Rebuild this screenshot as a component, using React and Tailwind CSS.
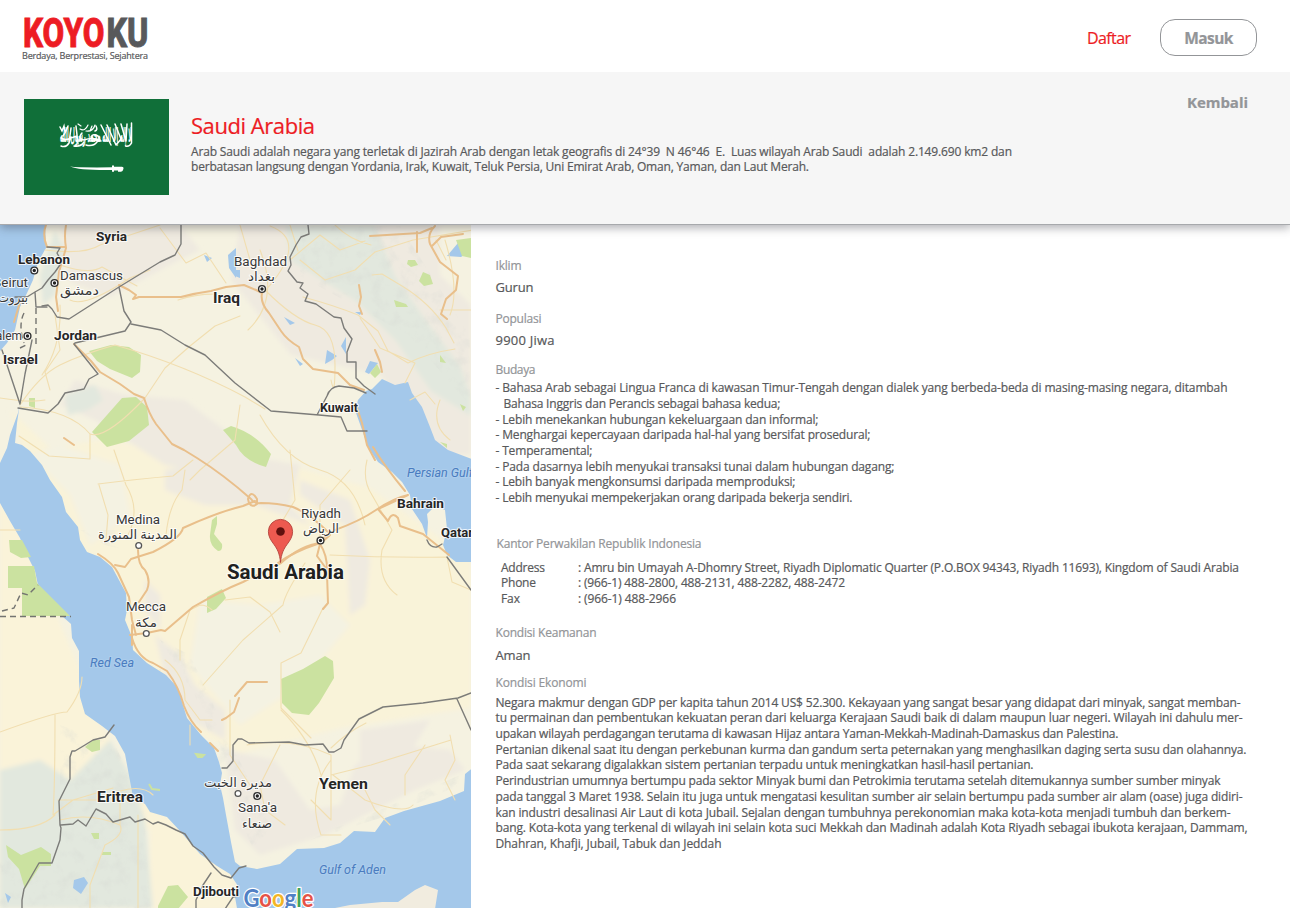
import React, { useLayoutEffect, useRef, useState } from "react";

// A single line of copy, tracked so that it fills the given measure.
function Line({ w, className = "", children }) {
  const ref = useRef(null);
  const [tracking, setTracking] = useState(0);
  useLayoutEffect(() => {
    const natural = ref.current.getBoundingClientRect().width;
    const count = Math.max(1, ref.current.textContent.length - 1);
    setTracking((w - natural) / count);
  }, []);
  return (
    <div className={"whitespace-pre " + className}>
      <span ref={ref} style={{ letterSpacing: tracking + "px" }}>{children}</span>
    </div>
  );
}

const culture = [
  ["- Bahasa Arab sebagai Lingua Franca di kawasan Timur-Tengah dengan dialek yang berbeda-beda di masing-masing negara, ditambah", 732],
  ["Bahasa Inggris dan Perancis sebagai bahasa kedua;", 277, true],
  ["- Lebih menekankan hubungan kekeluargaan dan informal;", 323],
  ["- Menghargai kepercayaan daripada hal-hal yang bersifat prosedural;", 375],
  ["- Temperamental;", 97],
  ["- Pada dasarnya lebih menyukai transaksi tunai dalam hubungan dagang;", 399],
  ["- Lebih banyak mengkonsumsi daripada memproduksi;", 300],
  ["- Lebih menyukai mempekerjakan orang daripada bekerja sendiri.", 357],
];

const office = [
  ["Address", 44, ": Amru bin Umayah A-Dhomry Street, Riyadh Diplomatic Quarter (P.O.BOX 94343, Riyadh 11693), Kingdom of Saudi Arabia", 661],
  ["Phone", 35, ": (966-1) 488-2800, 488-2131, 488-2282, 488-2472", 267],
  ["Fax", 19, ": (966-1) 488-2966", 98],
];

const economy = [
  ["Negara makmur dengan GDP per kapita tahun 2014 US$ 52.300. Kekayaan yang sangat besar yang didapat dari minyak, sangat memban-", 745],
  ["tu permainan dan pembentukan kekuatan peran dari keluarga Kerajaan Saudi baik di dalam maupun luar negeri. Wilayah ini dahulu mer-", 747],
  ["upakan wilayah perdagangan terutama di kawasan Hijaz antara Yaman-Mekkah-Madinah-Damaskus dan Palestina.", 623],
  ["Pertanian dikenal saat itu dengan perkebunan kurma dan gandum serta peternakan yang menghasilkan daging serta susu dan olahannya.", 751],
  ["Pada saat sekarang digalakkan sistem pertanian terpadu untuk meningkatkan hasil-hasil pertanian.", 538],
  ["Perindustrian umumnya bertumpu pada sektor Minyak bumi dan Petrokimia terutama setelah ditemukannya sumber sumber minyak", 725],
  ["pada tanggal 3 Maret 1938. Selain itu juga untuk mengatasi kesulitan sumber air selain bertumpu pada sumber air alam (oase) juga didiri-", 747],
  ["kan industri desalinasi Air Laut di kota Jubail. Sejalan dengan tumbuhnya perekonomian maka kota-kota menjadi tumbuh dan berkem-", 735],
  ["bang. Kota-kota yang terkenal di wilayah ini selain kota suci Mekkah dan Madinah adalah Kota Riyadh sebagai ibukota kerajaan, Dammam,", 752],
  ["Dhahran, Khafji, Jubail, Tabuk dan Jeddah", 226],
];

function Logo() {
  return (
    <svg width="130" height="34" viewBox="22 15 130 34" className="overflow-visible" fontFamily="Roboto, sans-serif" fontWeight="800" fontSize="41.2" strokeWidth="0.9">
      <text x="23" y="46.8" fill="#ed1c24" stroke="#ed1c24" textLength="81.500" lengthAdjust="spacingAndGlyphs">KOYO</text>
      <text x="106.5" y="46.8" fill="#58595b" stroke="#58595b" textLength="42" lengthAdjust="spacingAndGlyphs">KU</text>
    </svg>
  );
}

function Flag() {
  return (
    <svg width="145" height="96" viewBox="0 0 145 96" className="shrink-0">
      <rect width="145" height="96" fill="#106f39" />
      <text transform="translate(36 43) scale(1 1.6)" fill="#fff" fontFamily="'DejaVu Sans', sans-serif" fontWeight="bold" fontSize="12" direction="ltr" textLength="72" lengthAdjust="spacingAndGlyphs">لا إله إلا الله محمد رسول الله</text>
      <g fill="none" stroke="#fff" strokeWidth="1.5" strokeLinecap="round">
        <path d="M77 26l10 20M83 26l9 20M91 25l6 15M97 25l5 17M103 25l-1 17M107.500 24v20q-2 4-6 3M92 46l6-7M72 27q2 4-1 5" />
        <path d="M37 47q5 2 8-3l2-6M37 39q5 3 10 0l6-2M50 47q7 1 10-4M62 46q7 2 11-3 4-3 1-6-5-3-7 1 3 4 10 4M36 28l2 4 2-5 1 6M44 27q-2 6-5 10M47 29l-2 15M52 27l2 18M58 34q-5 6 2 7 8-3 16 0" />
        <path d="M56 30q5 3 8-4M62 32q7 1 9-6M66 32l2-5M54 25l3 2" strokeWidth="1.2" />
      </g>
      <path d="M46 67.5q9 1.200 42 .8v-1.800h2v1.300h7q3-.5 2.500 2t-2.500 3h-3v-1.300h-4v1.200h-2v-1.700q-33 .4-42-3.500z" fill="#fff" />
    </svg>
  );
}

const water = "#a4c8ea";
const park = "#cbe2a0";

const majorRoads = [
  "M119 285l10 5 7 5-3 4 6-2h42q15-4 30-6l15-4 18-2 12 5 6 3q-2 10 7 20l12 18q6 9 18 16l4 12 10 10 25 4q7 7 12 12l14 5",
  "M74 344l17 17 9 11 20 12 14 10 10 4q5 16 12 26l16 20 12 6 13 8q27 17 54 41 3 5 10 4 16 0 32 4 17 7 35 25",
  "M115 565l10 2 6-8 22-7q28-14 30-24 35-16 60-22l12-5",
  "M98 554q15 9 20 19l11 24 3 23 4 15M138 550q0 15 7 20 6 10 2 20l-8 12M130 635q16-1 31-5l4 1 28-24q30-17 50-25l38-19q20-18 40-20l9-8",
  "M320 544l-3 12 11 15M323 538l12-8q25-9 41-20 18-12 32-15l-30 14 10 12q4-10 10-3l2 8 23 8 26 21",
  "M320 544q8 12 7 30l1 29-5 6M278 563q15-11 42-20M132 638q6 20 21 25l14 8q12 16 17 35 6 16 17 26",
  "M373 447q12 20 32 44M370 236l50-3 12-5M417 232v20M435 226q-8 8-5 18l10 18 18 14-2 14-10 9-5 15 6 5M432 246l9-9 22-3M359 285l2 12-2 9 3 8M375 350l5 12 2 10M356 405l6 18 5 22 8 15",
  "M66 225q-2 11 0 23l-7 24-3 25 2 14M46 225q-4 10 1 22h18M20 302l-6 20M64 438l10 7M239 698l-5 14-8 6-4 2M235 696l12-14 20 0",
  "M248 499q3-10 9 0v5q-5 4-8-1zM132 625l0 20M210 743l8 8",
];

const minorRoads = [
  "M0 398q30 5 45 2M45 250q40 5 55-5l60-20M60 265q30 10 42 2l35 19M20 407q50 3 70 27 15 6 55-36M90 434v25l-41-3-30-20M20 405q20-30 40-40t55-20q70 20 130 52l20 12M42 375q20-30 18-70M50 390l-5-18 15-22-5-35M70 300q15 8 60-22l20-8M178 300q30-10 60-3M160 228l26 35 20-10 20 30",
  "M145 398l20-30 25-22 25-20 25-10M270 226q40 15-5 65M250 260l-10-35M260 250q20 50-12 80M265 290q30 30 50 35t20 40-4 15M290 225l8 26M290 260l30-25 20 15 25-9M300 260l25 20 30-10 20-18 38-12 60-10M372 275l10-1 20 12q28 17 44 42l8 15M303 297q30 8 55 18l20 16 10 20 20 12q20-10 47-14M360 318l20 30 35 15-10 20M335 225q15 15 36 20",
  "M260 415q25 45 60 55t45 55M240 405l-5 35-35 30-10 10M367 460q-5 20 5 35l20 35-10 20q-5 30 15 45M330 555q60 3 117 2l5 25 19 8M98 484q40-5 75-8l20-16M114 450l12 35q15 25 2 50M99 485l9 30-2 25M166 535q3-30 16-45l3-20M290 450l5 50-12 20M320 540v-35l30-35M0 530h20M305 563q-20 30-22 42l-40 35-40 45M323 608l-22 45-20 10v45l30 30M212 610q-5-5-12-5l-10 5-10 30 0 20M225 600l25-3 20 15 10 20M280 745l-20 40 5 25 20 15M165 660q20 15 20 40l15 20 12 0",
  "M0 732q55-20 67-20 15-20 15-35M55 715q0 70-2 100l20-15 40-12M0 830q40 0 55-15M58 800h40q40-20 55-5M120 795v30q5 10-15 20l-15 40v24M138 815v94M60 820q30-8 60 5M230 700v55q10 15 20 30M190 725v20M160 670l0 0M247 745q45-8 84 10v65l-20-20M331 748q15-15 35-25M331 760q-25 32-10 75l20 0M331 775l40-10 80-25M333 775l32 25q40 15 48 5M281 710q30 30 40 65M365 790l10 20 15 15M425 745l-20 30 0 20M450 735l5 25-10 20 10 20M445 240q15 50 5 75M440 400q-10 25 10 40M436 240l10 20M440 310h31M410 400l15-8 10 12",
];

const borders = [
  "M181 225v19l-6 11-15 7-41 25-50 32-12-2-5-8-4-4-6 1M119 287l5 24 7 11-6 9-50 12-1 1 24 30-9 5-5 10-19 4-7 11-10 9-30-5",
  "M131 324l30 6 24 15 20 10 30 28 36 28 48 4 22 2 6 14h20M317 415l10-19q3-9 12-10l15 2 12 5",
  "M308 225l1 9-8 3-5 8-6 12 1 8-3 6 9 11 6 1-3 5 8 6-3 7 11 3 18 13 7 1 3 10 8 11-5 13v10h9v16l8 8 11 8",
  "M2 350l18 54 5-30 7-34M47 247l13 1-3 5 5 9-7 10-7 8-6 8-7 4 1 15 11 0M35 292l-8 5-12 0",
  "M114 725l-9 12-12 3-8 5-10 6h-3l-2 6v22l-11 22 1 24 1 3-1 12-8 23H39l-15 26-2 11v10M61 825l12-1 5-4 8 6 10-17 10 5 7 8 17-5 5 5 10-3 8 5 5-2 8 3 10 5 9 4 8 12 10 7 11 14 8 8 9 3 8-10 7-2M211 873l-8 12-7 15v9",
  "M222 768l5 0 6-7 0-16 5-6h4l7 4 40-1 16 3 18-1 6 8h5l7-4 3-8 15-21 24-12 40-4 35-5 13-5M457 699l14 31",
  "M427 540q3 8 10 7l5-3M447 557l24 33M225 909l8-12 5-1",
];

const labels = [
  ["Syria", 96, 241, 31, "c"], ["Lebanon", 18, 264, 52, "c"], ["Damascus", 60, 280, 63, "t"],
  ["دمشق", 60, 295, 39, "t"], ["Iraq", 213, 303, 27, "l"], ["Baghdad", 234, 266, 53, "t"], ["بغداد", 248, 281, 27, "t"],
  ["Jordan", 54, 340, 43, "c"], ["Israel", 3, 364, 35, "c"], ["Kuwait", 320, 412, 38, "c"], ["Bahrain", 397, 508, 47, "c"],
  ["Medina", 116, 524, 44, "t"], ["المدينة المنورة", 98, 539, 79, "t"], ["Riyadh", 301, 518, 40, "t"], ["الرياض", 303, 533, 36, "t"],
  ["Mecca", 126, 611, 40, "t"], ["مكة", 135, 627, 22, "t"], ["Eritrea", 97, 802, 46, "l"], ["Yemen", 319, 789, 49, "l"],
  ["مديرة الخبت", 204, 787, 68, "t"], ["Sana'a", 238, 812, 39, "t"], ["صنعاء", 242, 828, 30, "t"], ["Djibouti", 193, 896, 46, "c"],
  ["Saudi Arabia", 227, 579, 117, "x"],
  ["Red Sea", 90, 667, 44, "w"], ["Gulf of Aden", 319, 874, 67, "w"],
  ["Beirut", -7, 287, 35, "t"], ["بيروت", -2, 302, 30, "t"], ["Jerusalem", -34, 340, 56, "t"], ["Persian Gulf", 407, 477, 66, "w"], ["Qatar", 441, 537, 32, "c"],
];

const labelStyle = {
  c: "text-[13px] font-bold fill-[#262626] stroke-white/80",
  l: "text-[14.5px] font-bold fill-[#262626] stroke-white/80",
  x: "text-[19.5px] font-bold fill-[#202020] stroke-white/80",
  t: "text-[13px] font-normal fill-[#383838] stroke-white/80",
  w: "text-[12.5px] font-normal italic fill-[#4a7cc0] stroke-white/10",
};

const capitals = [[34.3, 270.5], [54.5, 283], [27.5, 336], [262, 289], [320.5, 540.5], [257.3, 796]];
const towns = [[138.7, 545.5], [146.3, 633.5], [238, 793.5]];

function MapPanel() {
  return (
    <svg width="471" height="683" viewBox="0 225 471 683" className="block shrink-0">
      <defs>
        <filter id="soft" x="-10%" y="-10%" width="120%" height="120%"><feGaussianBlur stdDeviation="2" /></filter>
        <filter id="relief" x="0" y="0" width="100%" height="100%">
          <feTurbulence type="fractalNoise" baseFrequency="0.07" numOctaves="4" seed="8" />
          <feColorMatrix values="0 0 0 0 .66  0 0 0 0 .68  0 0 0 0 .64  0 2.4 0 0 -1.15" />
          <feComposite in2="SourceGraphic" operator="in" />
        </filter>
      </defs>
      <rect y="225" width="471" height="683" fill="#f5f2e1" />
      <g filter="url(#soft)">
        <path d="M10 410l40 38 60-10 70 20 60 20 60-10 70 20 70 50 31 20v150l-130 20-100 25-70-30-50-80-60-100-30-70z" fill="#f9f3d9" />
        <path d="M0 500l30 50 50 120 20 50 35 70 60 50 40 30v40H150V830L60 800 0 780z" fill="#faf3d9" />
        <path d="M200 600l60 5 60-10 30 30-50 60-60 40-50-60zM30 455l30-10 60 20 10 50-40 30-20-50z" fill="#f4f2e2" />
        <path d="M60 228l120-3 20 25-30 15-60 32-40-15zM240 225h200v50l31 30v150h-30l-60-80-90-20-60-75zM75 380l50 15 60 5 40 30 40 20-25 30-75-15-70-45-35-15zM165 470l75-15 60 10-10 40 20 20-55-20-50 0-40-15zM300 480l50 20 20 60-5 45-15 10-5-90-45-30z" fill="#efeae0" />
        <path d="M285 226h90l20 50 35 50 30 40 11 30v20l-40-25-35-50-40-40-65-40zM55 230l10 20-10 45-12 10-3-30zM65 395l30-10 8 15-15 10-20 5zM0 770l40-10 30 20 40-40 20 35 15 45 8 88H0z" fill="#e2e8de" />
        <path d="M225 750l50 10 35 50 30-5 15-40 40-20 55 5 15 20-50 20-90 45-65 20-25-25zM145 580l15 15 0 35-15-20zM155 635l25 20 15 30 30 25v30l-35-20-25-45zM360 730l70-10-30 50-40 15z" fill="#efeae0" />
      </g>
      <path d="M300 226h100l70 110v70l-60-70-110-60zM60 725l55 20 28 60 8 103H60zM160 640l30 15 40 85 40 85-15 30-20-50-40-110zM80 530h40l5 20-20-5zM330 830l50-20 80-35v10l-70 30-80 25zM0 860h60v48H0z" fill="#fff" filter="url(#relief)" opacity=".4" />
      <g fill={water}>
        <path d="M0 225h45l1 23-8 14-5 18-6 13-7 14-5 23-8 13-7 8z" />
        <path d="M20 403l-3 20-2 20 7 2 8 6 12 14 8 15 12 17 4 15 12 15 2 13 7 12 13 5 12 10 14 26 1 17-2 10 7 17 1 13 14 13 19 12 12 13 5 17 4 13 14 17 13 13 5 14 3 11-2 12 3 13 3 17 5 27 4 20 5 4 17 3 23-5 17-15 27-1 16-5 14-12 21 1 10-14 19-7 36-10 24-10 1-17 9-7v150H240l-2-3-3-17 3-11-8-12-13-8-17-12-20-23-13-14-17-5-5-8-12-7-3-16-5-27-10-18-13-10-17-12-5-17-1-16v-30l-7-13-1-14-18-16-13-13-5-24-10-20-5-13-10-17-10-18v-40l7-15 3-13 8-22z" />
        <path d="M366 391l6-2 10-10 13 6 13-3 4 11 10 14 8 20 5 13 13 10 24 9v103l-16 0-9-7-4-10 4-16-2-19-10-4-8 8 1 8-1 16-5-14-10-15-2-14-8-13-10-10-14-10-10-15-7-20-6-17 3-10z" />
        <path d="M228 255l8-7v30l-7-10zM365 372l5-11 8 2-9 11zM235 270l5 0v8l-5-2zM447 256l11-13 6 12-3 2zM327 350l10 6-5 4-7 4zM341 346l5-9v17zM204 255l8 3-5 4zM295 358l8 6-3 2zM355 312l7 0-2 3zM284 317l11 6-5 2zM74 880l10-3 4 6-7 11-8-6zM5 893l6 4-3 6z" />
      </g>
      <path d="M330 909l20-4 32-3 16 0 17-12 10-5 13 5-3 19z" fill="#f1ecdf" />
      <g fill={park}>
        <path d="M89 351l22-6 18 2 12 8-1 17-8 6-22-9-13-8zM92 432l30-34 14-1 11 10 2 18-20 16-22 6zM29 398l6 0 0 10-6-2zM223 430l8-4q24 7 40 28l-5 13q-22-6-30-22zM9 540l13 0 9 17-10 1-11-6zM8 566h26l3 17 17 17 16 16H22v-28H8zM212 520l5-4v8l-3 10 8 10q1 7-4 7-9-6-8-16zM207 597l15-8 4 9-10 11-9 4zM281 679l22-10 22-13 8 5 1 17-15 25-10 12-17-2-10-10zM456 240l15-2v20l-9-2zM408 260l7 0 3 5-7 2-4-3zM423 272l7 3 3 9-9 2-5-5zM394 300l12 4 2 3-12 0zM440 355l6 8-6-1zM370 373l7-9 4 8-6 6zM460 404l6 3-3 4zM85 747l8-7 7 0 0 10-8 2zM6 845l15 10 20-8 10 7 0 12h-11l-15 23-6-20-11-12zM158 906l10-20 10-1 10 12-10 12h-20zM91 833h8l0 6-5 0zM102 852l9 0 0 3-9 0zM440 442l7 2 0 4z" />
        <path d="M196 754l8 1-2 2-4 0zM149 784l3 5 8 1-8-1z" stroke={park} strokeWidth="2" />
      </g>
      <g fill="none" strokeLinejoin="round" strokeLinecap="round">
        {minorRoads.map((d) => <path key={d} d={d} stroke="#f1deb0" strokeWidth="1.1" />)}
        {majorRoads.map((d) => <path key={d} d={d} stroke="#e9bf8b" strokeWidth="2" />)}
        {borders.map((d) => <path key={d} d={d} stroke="#7c7c79" strokeWidth="1.4" />)}
        <path d="M0 616.5h71M2 611l12-3 7-15 7 2 10-10M24 313q-6 12 0 30M36 308v40M20 348l8-4" stroke="#747471" strokeWidth="1.4" strokeDasharray="6 4" strokeLinecap="butt" />
      </g>
      {labels.map(([name, x, y, w, kind]) => (
        <text key={name} x={x} y={y} textLength={w} lengthAdjust="spacingAndGlyphs" direction="ltr" fontFamily="Roboto, 'DejaVu Sans', sans-serif" strokeWidth="2" strokeLinejoin="round" paintOrder="stroke" className={labelStyle[kind]}>{name}</text>
      ))}
      {capitals.map(([x, y]) => (
        <g key={x + "," + y}>
          <circle cx={x} cy={y} r="3.4" fill="#fff" stroke="#303030" strokeWidth="1.4" />
          <circle cx={x} cy={y} r="1.7" fill="#202020" />
        </g>
      ))}
      {towns.map(([x, y]) => <circle key={x} cx={x} cy={y} r="2.9" fill="#fff" stroke="#555" strokeWidth="1.3" />)}
      <path d="M280.5 562.5c-.8-9-3.2-13.5-6.5-18-3.4-4.5-5.6-8-5.6-13a12.1 12.1 0 0 1 24.2 0c0 5-2.2 8.5-5.6 13-3.3 4.5-5.7 9-6.5 18z" fill="#ed5a50" stroke="#b3433c" strokeWidth=".9" />
      <circle cx="280.5" cy="531.5" r="4.3" fill="#5f100e" />
      <text x="243.5" y="907" fontSize="24" fontFamily="Lato, sans-serif" fontWeight="700" textLength="70" lengthAdjust="spacingAndGlyphs" stroke="#fff" strokeWidth="2.5" strokeLinejoin="round" paintOrder="stroke">
        <tspan fill="#5180c4">G</tspan><tspan fill="#e55347">o</tspan><tspan fill="#f3b625">o</tspan><tspan fill="#5180c4">g</tspan><tspan fill="#3fa35c">l</tspan><tspan fill="#e55347">e</tspan>
      </text>
    </svg>
  );
}

const label = "text-[12px] leading-4 text-[#939598]";
const value = "text-[13px] leading-4";

export default function App() {
  return (
    <div className="w-[1290px] h-[909px] overflow-hidden bg-white font-['Open_Sans',sans-serif] text-[#58595b] [-webkit-text-stroke:0.2px]">
      <header className="relative z-20 bg-white h-[72px] flex items-start justify-between pl-[22px] pr-[33px]">
        <div className="pt-[15px]">
          <Logo />
          <Line w={126} className="text-[9px] leading-[12px] mt-px">Berdaya, Berprestasi, Sejahtera</Line>
        </div>
        <nav className="flex items-start pt-[19px]">
          <Line w={44} className="w-[44px] mr-[29px] text-[16px] leading-[38px] text-[#ed1c24]">Daftar</Line>
          <button className="w-[97px] h-[37px] flex items-center justify-center rounded-[15px] border border-[#939598] text-[#939598]">
            <Line w={49} className="text-[15.5px] leading-[36px] font-bold">Masuk</Line>
          </button>
        </nav>
      </header>
      <section className="relative z-10 h-[153px] flex items-start pt-[27px] pl-6 pr-[42px] bg-[#f6f6f6] border-b border-[#a7a9ac] shadow-[0_3px_9px_rgba(50,50,60,0.38)]">
        <Flag />
        <div className="ml-[22px] pt-[10px] grow">
          <Line w={124} className="text-[22px] leading-[32px] text-[#ed1c24]">Saudi Arabia</Line>
          <Line w={821} className="text-[12px] leading-[15px] mt-[2.5px]">Arab Saudi adalah negara yang terletak di Jazirah Arab dengan letak geografis di 24°39  N 46°46  E.  Luas wilayah Arab Saudi  adalah 2.149.690 km2 dan</Line>
          <Line w={618} className="text-[12px] leading-[15px]">berbatasan langsung dengan Yordania, Irak, Kuwait, Teluk Persia, Uni Emirat Arab, Oman, Yaman, dan Laut Merah.</Line>
        </div>
        <Line w={61} className="w-[61px] -mt-[9px] text-[15px] leading-[24px] font-bold text-[#939598]">Kembali</Line>
      </section>
      <main className="flex h-[684px]">
        <MapPanel />
        <div className="pl-[24.5px] pt-[33.2px] text-[12px]">
          <Line w={26} className={label}>Iklim</Line>
          <Line w={38} className={value + " mt-[5.3px]"}>Gurun</Line>
          <Line w={46} className={label + " mt-[15.3px]"}>Populasi</Line>
          <Line w={59} className={value + " mt-[5.7px]"}>9900 Jiwa</Line>
          <Line w={40} className={label + " mt-[13.1px]"}>Budaya</Line>
          <div className="mt-[2.6px]">
            {culture.map(([t, w, indent]) => <Line key={t} w={w} className={indent ? "leading-[15.7px] pl-2" : "leading-[15.7px]"}>{t}</Line>)}
          </div>
          <Line w={205} className={label + " mt-[29.8px] ml-px"}>Kantor Perwakilan Republik Indonesia</Line>
          <div className="mt-[8.1px] pl-[5.5px]">
            {office.map(([k, kw, v, vw]) => (
              <div key={k} className="flex leading-[15.7px]">
                <Line w={kw} className="w-[77px]">{k}</Line>
                <Line w={vw}>{v}</Line>
              </div>
            ))}
          </div>
          <Line w={101} className={label + " mt-[17.8px]"}>Kondisi Keamanan</Line>
          <Line w={35} className={value + " mt-[6.3px]"}>Aman</Line>
          <Line w={91} className={label + " mt-[12.6px]"}>Kondisi Ekonomi</Line>
          <div className="mt-[3.2px]">
            {economy.map(([t, w]) => <Line key={t} w={w} className="leading-[15.7px]">{t}</Line>)}
          </div>
        </div>
      </main>
    </div>
  );
}
